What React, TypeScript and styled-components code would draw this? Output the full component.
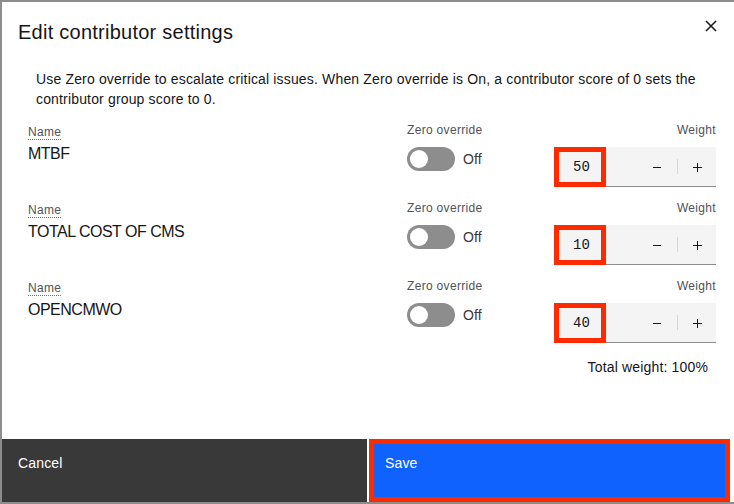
import React from "react";
import styled, { createGlobalStyle } from "styled-components";

const GlobalStyle = createGlobalStyle`
  html, body { margin: 0; padding: 0; }
  body {
    background: #8d8d8d;
    font-family: "Liberation Sans", Arial, sans-serif;
    color: #161616;
    overflow: hidden;
  }
`;

const Page = styled.div`
  width: 734px;
  height: 504px;
  padding: 2px 0 2px 2px;
  box-sizing: border-box;
  overflow: hidden;
`;

const Modal = styled.div`
  width: 732px;
  height: 500px;
  background: #ffffff;
  display: flex;
  flex-direction: column;
`;

const Header = styled.div`
  display: flex;
  justify-content: space-between;
  align-items: flex-start;
  padding: 16px 15px 0 16px;
`;

const Title = styled.h2`
  margin: 0;
  font-size: 20px;
  line-height: 28px;
  font-weight: 400;
  letter-spacing: 0.25px;
  color: #161616;
`;

const CloseButton = styled.button`
  width: 16px;
  height: 16px;
  padding: 0;
  border: none;
  background: transparent;
  display: flex;
  align-items: center;
  justify-content: center;
  color: #161616;
`;

const Body = styled.div`
  flex: 1;
  padding: 0 18px 0 26px;
  display: flex;
  flex-direction: column;
`;

const Description = styled.p`
  margin: 23px 20px 0 8px;
  font-size: 14px;
  line-height: 20px;
  letter-spacing: 0.16px;
  color: #161616;
`;

const Rows = styled.div`
  margin-top: 13px;
  display: flex;
  flex-direction: column;
  gap: 13px;
`;

const Row = styled.div`
  display: grid;
  grid-template-columns: 1fr 147px 162px;
`;

const NameCol = styled.div`
  padding-top: 2px;
  display: flex;
  flex-direction: column;
  align-items: flex-start;
`;

const FieldLabel = styled.span<{ $right?: boolean }>`
  display: block;
  font-size: 12px;
  line-height: 16px;
  letter-spacing: 0.32px;
  color: #525252;
  text-align: ${(p) => (p.$right ? "right" : "left")};
`;

const DottedTerm = styled.span`
  border-bottom: 1px dotted #6f6f6f;
  line-height: 14px;
  display: inline-block;
`;

const NameValue = styled.div`
  margin-top: 3px;
  font-size: 16px;
  line-height: 22px;
  letter-spacing: -0.5px;
  color: #161616;
`;

const ControlCol = styled.div`
  display: flex;
  flex-direction: column;
  gap: 9px;
`;

const ToggleWrap = styled.div`
  display: flex;
  align-items: center;
  gap: 8px;
  height: 24px;
`;

const Track = styled.span<{ $on: boolean }>`
  position: relative;
  width: 48px;
  height: 24px;
  border-radius: 12px;
  background: ${(p) => (p.$on ? "#24a148" : "#8d8d8d")};
  flex-shrink: 0;
`;

const Knob = styled.span<{ $on: boolean }>`
  position: absolute;
  top: 3px;
  left: ${(p) => (p.$on ? "27px" : "3px")};
  width: 18px;
  height: 18px;
  border-radius: 50%;
  background: #ffffff;
`;

const ToggleText = styled.span`
  font-size: 14px;
  line-height: 20px;
  letter-spacing: 0.16px;
  color: #393939;
`;

const NumberInput = styled.div`
  display: flex;
  height: 40px;
  background: #f4f4f4;
`;

const ValueBox = styled.div`
  width: 52px;
  box-sizing: border-box;
  border: 5px solid #ff2a00;
  display: flex;
  align-items: center;
  justify-content: center;
  padding-left: 3px;
  font-family: "Liberation Mono", "DejaVu Sans Mono", monospace;
  font-size: 14px;
  color: #161616;
`;

const Steppers = styled.div`
  flex: 1;
  display: flex;
  align-items: center;
  justify-content: flex-end;
  border-bottom: 1px solid #8d8d8d;
  box-sizing: border-box;
`;

const StepButton = styled.button<{ $w: number }>`
  width: ${(p) => p.$w}px;
  height: 100%;
  padding: 0;
  border: none;
  background: transparent;
  display: flex;
  align-items: center;
  justify-content: center;
  color: #161616;
`;

const Divider = styled.span`
  width: 1px;
  height: 15px;
  background: #d6d6d6;
`;

const Total = styled.div`
  margin-top: 14px;
  padding-right: 8px;
  text-align: right;
  font-size: 14px;
  line-height: 20px;
  letter-spacing: 0.16px;
  color: #161616;
`;

const Footer = styled.div`
  display: grid;
  grid-template-columns: 365px 361px;
  column-gap: 2px;
  height: 63px;
`;

const FooterButton = styled.button<{ $primary?: boolean }>`
  box-sizing: border-box;
  height: 100%;
  margin: 0;
  border: ${(p) => (p.$primary ? "5px solid #ff2a00" : "none")};
  background: ${(p) => (p.$primary ? "#0f62fe" : "#393939")};
  color: #ffffff;
  font-family: "Liberation Sans", Arial, sans-serif;
  font-size: 14px;
  line-height: 18px;
  letter-spacing: 0.16px;
  text-align: left;
  display: flex;
  align-items: flex-start;
  padding: ${(p) => (p.$primary ? "10px 11px" : "15px 16px")};
`;

const Minus = () => (
  <svg width="16" height="16" viewBox="0 0 16 16" fill="none">
    <rect x="4" y="8" width="8" height="1" fill="currentColor" />
  </svg>
);

const Plus = () => (
  <svg width="16" height="16" viewBox="0 0 16 16" fill="none">
    <rect x="4" y="8" width="9" height="1" fill="currentColor" />
    <rect x="8" y="4" width="1" height="9" fill="currentColor" />
  </svg>
);

const CloseIcon = () => (
  <svg width="16" height="16" viewBox="0 0 16 16" fill="none">
    <path d="M3 3 L13 13 M13 3 L3 13" stroke="currentColor" strokeWidth="1.5" />
  </svg>
);

const contributors = [
  { name: "MTBF", weight: 50 },
  { name: "TOTAL COST OF CMS", weight: 10 },
  { name: "OPENCMWO", weight: 40 },
];

export default function App() {
  return (
    <>
      <GlobalStyle />
      <Page>
        <Modal>
          <Header>
            <Title>Edit contributor settings</Title>
            <CloseButton aria-label="Close">
              <CloseIcon />
            </CloseButton>
          </Header>
          <Body>
            <Description>
              Use Zero override to escalate critical issues. When Zero override is On, a contributor
              score of 0 sets the contributor group score to 0.
            </Description>
            <Rows>
              {contributors.map((c) => (
                <Row key={c.name}>
                  <NameCol>
                    <FieldLabel>
                      <DottedTerm>Name</DottedTerm>
                    </FieldLabel>
                    <NameValue>{c.name}</NameValue>
                  </NameCol>
                  <ControlCol>
                    <FieldLabel>Zero override</FieldLabel>
                    <ToggleWrap>
                      <Track $on={false}>
                        <Knob $on={false} />
                      </Track>
                      <ToggleText>Off</ToggleText>
                    </ToggleWrap>
                  </ControlCol>
                  <ControlCol>
                    <FieldLabel $right>Weight</FieldLabel>
                    <NumberInput>
                      <ValueBox>{c.weight}</ValueBox>
                      <Steppers>
                        <StepButton $w={40} aria-label="Decrement">
                          <Minus />
                        </StepButton>
                        <Divider />
                        <StepButton $w={38} aria-label="Increment">
                          <Plus />
                        </StepButton>
                      </Steppers>
                    </NumberInput>
                  </ControlCol>
                </Row>
              ))}
            </Rows>
            <Total>Total weight: 100%</Total>
          </Body>
          <Footer>
            <FooterButton>Cancel</FooterButton>
            <FooterButton $primary>Save</FooterButton>
          </Footer>
        </Modal>
      </Page>
    </>
  );
}
